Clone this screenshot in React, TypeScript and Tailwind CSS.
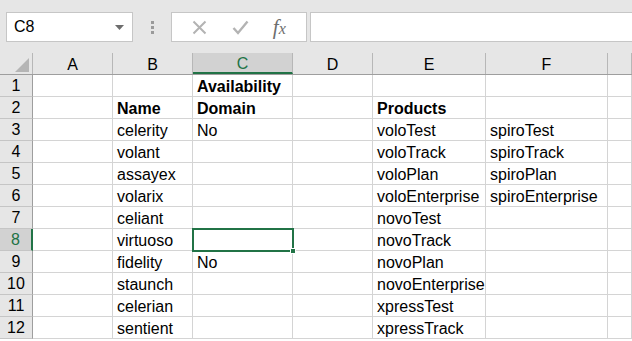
import React from 'react';

const cols = ['A', 'B', 'C', 'D', 'E', 'F', ''];
const widths = ['w-[80px]', 'w-[80px]', 'w-[100px]', 'w-[80px]', 'w-[113px]', 'w-[122px]', 'flex-1'];

type Cell = { text?: string; bold?: boolean };
const data: Record<number, Record<string, Cell>> = {
  1: { C: { text: 'Availability', bold: true } },
  2: { B: { text: 'Name', bold: true }, C: { text: 'Domain', bold: true }, E: { text: 'Products', bold: true } },
  3: { B: { text: 'celerity' }, C: { text: 'No' }, E: { text: 'voloTest' }, F: { text: 'spiroTest' } },
  4: { B: { text: 'volant' }, E: { text: 'voloTrack' }, F: { text: 'spiroTrack' } },
  5: { B: { text: 'assayex' }, E: { text: 'voloPlan' }, F: { text: 'spiroPlan' } },
  6: { B: { text: 'volarix' }, E: { text: 'voloEnterprise' }, F: { text: 'spiroEnterprise' } },
  7: { B: { text: 'celiant' }, E: { text: 'novoTest' } },
  8: { B: { text: 'virtuoso' }, E: { text: 'novoTrack' } },
  9: { B: { text: 'fidelity' }, C: { text: 'No' }, E: { text: 'novoPlan' } },
  10: { B: { text: 'staunch' }, E: { text: 'novoEnterprise' } },
  11: { B: { text: 'celerian' }, E: { text: 'xpressTest' } },
  12: { B: { text: 'sentient' }, E: { text: 'xpressTrack' } },
};

const rows = Array.from({ length: 12 }, (_, i) => i + 1);

export default function App() {
  return (
    <div className="w-[632px] h-[341px] overflow-hidden bg-white text-black font-['Liberation_Sans',Arial,sans-serif]">
      {/* formula bar */}
      <div className="h-[53px] bg-[#e6e6e6] flex items-start pt-3 pl-[6px]">
        <div className="w-[127px] h-[30px] bg-white border border-[#c6c6c6] flex items-center justify-between pl-[7px] pr-[8px]">
          <span className="text-[16px] leading-none">C8</span>
          <svg width="9" height="5" viewBox="0 0 9 5">
            <path d="M0 0h9L4.5 5z" fill="#6d6d6d" />
          </svg>
        </div>
        <div className="w-[38px] h-[30px] flex flex-col items-center justify-center gap-[2px]">
          <div className="w-[3px] h-[3px] bg-[#9a9a9a]" />
          <div className="w-[3px] h-[3px] bg-[#9a9a9a]" />
          <div className="w-[3px] h-[3px] bg-[#9a9a9a]" />
        </div>
        <div className="w-[136px] h-[30px] bg-white border border-[#c6c6c6] flex items-center justify-around px-[8px]">
          <svg width="15" height="15" viewBox="0 0 15 15">
            <path d="M1.5 1.5l12 12M13.5 1.5l-12 12" stroke="#b3b3b3" strokeWidth="2" />
          </svg>
          <svg width="17" height="15" viewBox="0 0 17 15">
            <path d="M1.5 8l4.5 5L15.5 1.5" stroke="#b3b3b3" strokeWidth="2.4" fill="none" />
          </svg>
          <span className="font-['Liberation_Serif',serif] italic text-[21px] text-[#6e6e6e] leading-none">
            f<span className="text-[16px]">x</span>
          </span>
        </div>
        <div className="ml-[3px] flex-1 h-[30px] bg-white border border-[#c6c6c6] border-r-0" />
      </div>

      {/* column headers */}
      <div className="flex h-[22px] bg-[#e6e6e6] border-b border-[#9e9e9e]">
        <div className="w-[33px] shrink-0 border-r border-[#b7b7b7] relative">
          <svg className="absolute right-[3px] bottom-[2px]" width="14" height="14" viewBox="0 0 14 14">
            <path d="M14 0V14H0z" fill="#b5b5b5" />
          </svg>
        </div>
        {cols.map((c, i) => (
          <div
            key={i}
            className={`${widths[i]} shrink-0 flex items-center justify-center pt-[2px] text-[16px] border-r ${
              c === 'C'
                ? 'bg-[#d2d2d2] text-[#217346] border-[#b7b7b7] border-b-2 border-b-[#217346]'
                : 'border-[#b7b7b7]'
            }`}
          >
            {c}
          </div>
        ))}
      </div>

      {/* rows */}
      {rows.map((r) => (
        <div key={r} className="flex h-[22px]">
          <div
            className={`w-[33px] shrink-0 flex items-center justify-center text-[16px] border-b ${
              r === 8
                ? 'bg-[#d2d2d2] text-[#217346] border-[#c5c5c5] border-r-2 border-r-[#217346]'
                : 'bg-[#e6e6e6] border-[#c5c5c5] border-r border-r-[#9e9e9e]'
            }`}
          >
            {r}
          </div>
          {cols.map((c, i) => {
            const cell = data[r]?.[c];
            const selected = r === 8 && c === 'C';
            return (
              <div
                key={i}
                className={`${widths[i]} shrink-0 border-r border-b border-[#d4d4d4] pl-[4px] pt-[1px] text-[16px] leading-[21px] whitespace-nowrap overflow-visible relative ${
                  cell?.bold ? 'font-bold' : ''
                }`}
              >
                {cell?.text}
                {selected && (
                  <div className="absolute left-[-1px] top-[-1px] w-[102px] h-[24px] border-2 border-[#217346] z-10">
                    <div className="absolute right-[-4px] bottom-[-4px] w-[6px] h-[6px] bg-[#217346] border border-white" />
                  </div>
                )}
              </div>
            );
          })}
        </div>
      ))}
    </div>
  );
}
